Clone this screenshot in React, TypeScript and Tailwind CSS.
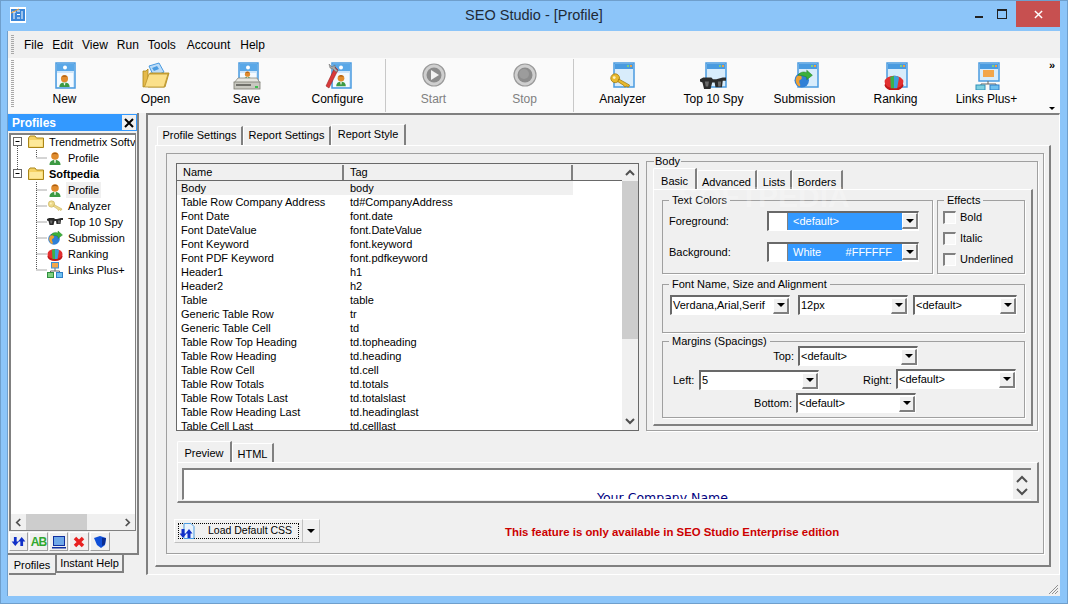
import React from 'react';

const Person: React.FC = () => (
  <svg x="0" y="0" width="16" height="16" viewBox="0 0 16 16">
    <path d="M2.500 15c0-3.500 2-5 5.500-5s5.500 1.500 5.500 5z" fill="#3c9a43" />
    <path d="M7 10h2l-.5 3h-1z" fill="#e6f2e0" />
    <circle cx="8" cy="6" r="3.800" fill="#e08b2c" />
    <path d="M5 4.500C6 2 10 2 11 4.500 9.500 3.800 6.500 3.800 5 4.500z" fill="#a85c12" />
  </svg>
);

const KeyGlyph: React.FC<{ pale?: boolean }> = ({ pale }) => (
  <svg viewBox="0 0 16 16" width="16" height="16">
    <g fill={pale ? '#ecd98a' : '#e8b92e'} stroke={pale ? '#c9b25e' : '#a47d10'} strokeWidth="0.6">
      <circle cx="4.500" cy="6" r="3.200" />
      <path d="M7 6.500l8 4.500-1 1.500-1.500-.8-1 .8-1-1.500-4-2.500z" />
    </g>
    <circle cx="3.800" cy="5.500" r="1" fill="#fff4c0" />
  </svg>
);

const GlassesGlyph: React.FC = () => (
  <svg viewBox="0 0 16 16" width="16" height="16">
    <path d="M0 5l2-1h5l1 1h2l4-1h2v2l-2 0-.5 4h-4L9 7H7.500L6.500 11h-4L1.500 7 0 6.500z" fill="#2c2c2c" />
    <path d="M3 6.500h2.500l-.5 3H3.500zM11 6.500h2l-.3 3h-1.500z" fill="#6b6b6b" />
  </svg>
);

const GlobeGlyph: React.FC = () => (
  <svg viewBox="0 0 16 16" width="16" height="16">
    <circle cx="7" cy="9" r="5.800" fill="#2f7fd6" />
    <path d="M3 6c2-2 4-1 4 1s-2 1-2 3 2 3 0 4C3 13 1 9 3 6z" fill="#f0a030" />
    <path d="M4 5c2-3 5-3 7-2V1l4.500 4L11 8.500V6.500C8.500 5.500 6 5 4 5z" fill="#3bb03b" stroke="#1f7a1f" strokeWidth="0.4" />
  </svg>
);

const PieGlyph: React.FC = () => (
  <svg viewBox="0 0 16 16" width="16" height="16">
    <ellipse cx="8" cy="10.500" rx="7.500" ry="4.500" fill="#c01818" />
    <ellipse cx="8" cy="8" rx="7.500" ry="5" fill="#e23030" />
    <path d="M8 3c2 0 3 .5 4 1.500L10.500 13H8z" fill="#3b9fdc" />
    <path d="M5 4l3-1v10H5.500z" fill="#3cb04a" />
  </svg>
);

const NetworkGlyph: React.FC = () => (
  <svg viewBox="0 0 16 16" width="16" height="16">
    <path d="M8 6v3M3.500 11V9h9v2" stroke="#666" fill="none" />
    <rect x="4.500" y="0.500" width="7" height="5.500" fill="#f3a64a" stroke="#3d8fd8" />
    <rect x="0.500" y="10.500" width="6" height="5" fill="#7fd07f" stroke="#2f8f3f" />
    <rect x="9.500" y="10.500" width="6" height="5" fill="#6fc0f0" stroke="#2f7fc8" />
  </svg>
);

const FolderGlyph: React.FC = () => (
  <svg viewBox="0 0 16 14" width="16" height="14">
    <path d="M.5 3V12.500h15V3h-7L7 1H2z" fill="#f5d264" stroke="#a98518" />
    <path d="M1.500 5h13v6.500h-13z" fill="#fde99a" />
  </svg>
);

// blue window/page used behind most toolbar icons
const AppPage: React.FC<{ x: number; w?: number; h?: number; y?: number }> = ({ x, y = 1, w = 20, h = 24 }) => (
  <g>
    <rect x={x} y={y} width={w} height={h} fill="#d8ecfb" stroke="#4a9be0" strokeWidth="1.500" />
    <rect x={x + 1} y={y + 1} width={w - 2} height="5" fill="#4a9be0" />
    <rect x={x + w - 7} y={y + 2} width="2" height="2" fill="#7fd07f" />
    <rect x={x + w - 4} y={y + 2} width="2" height="2" fill="#f0a040" />
  </g>
);

const ProfilePage: React.FC = () => (
  <g>
    <rect x="5" y="1" width="19" height="25" fill="#cfe6fa" stroke="#4a9be0" strokeWidth="1.500" />
    <rect x="6" y="2" width="17" height="7" fill="#5aa8e8" />
    <circle cx="14" cy="5.500" r="2" fill="#fff" />
    <rect x="6" y="11" width="16" height="14" fill="#f4faff" />
  </g>
);

const Nested: React.FC<{ x: number; y: number; s: number; children: React.ReactNode }> = ({ x, y, s, children }) => (
  <svg x={x} y={y} width={s} height={s} viewBox="0 0 16 16">{children}</svg>
);

const NewIcon: React.FC = () => (
  <svg viewBox="0 0 28 28" width="28" height="28">
    <ProfilePage />
    <Nested x={6} y={11} s={15}><Person /></Nested>
  </svg>
);

const OpenIcon: React.FC = () => (
  <svg viewBox="0 0 28 28" width="28" height="28">
    <path d="M7 4l10-3 5 9-10 5z" fill="#bcdcf8" stroke="#4a9be0" />
    <path d="M10 6l5-2 2 3-5 2z" fill="#4a9be0" />
    <path d="M1 9h3l2-2v18h17l4-14H8L5 24 1 25z" fill="#e5b94a" stroke="#a98518" strokeWidth="0.800" />
    <path d="M7 12h19l-4 13H2.500z" fill="#fbe08a" stroke="#b8922a" strokeWidth="0.800" />
  </svg>
);

const SaveIcon: React.FC = () => (
  <svg viewBox="0 0 28 28" width="28" height="28">
    <g transform="translate(1 0)"><ProfilePage /></g>
    <Nested x={9} y={8} s={11}><Person /></Nested>
    <path d="M5 16h19l3 5H1z" fill="#e6e6e0" stroke="#8a8a80" strokeWidth="0.800" />
    <rect x="1" y="20" width="26" height="7" fill="#c8c8c0" stroke="#7a7a70" strokeWidth="0.800" />
    <rect x="3" y="22" width="15" height="2" fill="#70706a" />
    <rect x="22" y="24" width="3" height="2" fill="#3fbf4f" />
  </svg>
);

const ConfigureIcon: React.FC = () => (
  <svg viewBox="0 0 28 28" width="28" height="28">
    <g transform="translate(3 0)"><ProfilePage /></g>
    <Nested x={10} y={11} s={14}><Person /></Nested>
    <path d="M11 5L2 24l3 2L14 8z" fill="#d93a3a" stroke="#8c1515" strokeWidth="0.500" />
    <path d="M5 2l3 3 3-2v3l3 3-2 1-3-3-3-1z" fill="#a8a8a8" stroke="#666" strokeWidth="0.500" />
  </svg>
);

const MediaIcon: React.FC<{ stop?: boolean }> = ({ stop }) => (
  <svg viewBox="0 0 28 28" width="28" height="28">
    <circle cx="14" cy="13" r="11" fill="#cfcfcf" stroke="#9a9a9a" strokeWidth="1.200" />
    <circle cx="14" cy="13" r="7.500" fill="#8c8c8c" />
    {stop ? <circle cx="13" cy="12" r="5" fill="#9c9c9c" /> : <path d="M11 8l8 5-8 5z" fill="#f2f2f2" />}
  </svg>
);

const AnalyzerIcon: React.FC = () => (
  <svg viewBox="0 0 28 28" width="28" height="28">
    <AppPage x={5} />
    <Nested x={0} y={8} s={22}><KeyGlyph /></Nested>
  </svg>
);

const SpyIcon: React.FC = () => (
  <svg viewBox="0 0 28 28" width="28" height="28">
    <AppPage x={6} />
    <Nested x={0} y={9} s={26}><GlassesGlyph /></Nested>
  </svg>
);

const SubmissionIcon: React.FC = () => (
  <svg viewBox="0 0 28 28" width="28" height="28">
    <AppPage x={7} />
    <Nested x={2} y={7} s={20}><GlobeGlyph /></Nested>
  </svg>
);

const RankingIcon: React.FC = () => (
  <svg viewBox="0 0 28 28" width="28" height="28">
    <AppPage x={5} />
    <Nested x={2} y={10} s={20}><PieGlyph /></Nested>
  </svg>
);

const LinksIcon: React.FC = () => (
  <svg viewBox="0 0 28 28" width="28" height="28">
    <AppPage x={6} h={18} />
    <rect x="10" y="8" width="11" height="7" fill="#f3a64a" />
    <path d="M15 19v3M8 24v-2h15v2" stroke="#666" fill="none" />
    <rect x="3" y="23" width="9" height="5" fill="#7fd0e0" stroke="#2f8fb8" />
    <rect x="17" y="23" width="9" height="5" fill="#6fc0f0" stroke="#2f7fc8" />
  </svg>
);

const Arrow: React.FC = () => (
  <svg viewBox="0 0 8 4" width="8" height="4"><path d="M0 0h8L4 4z" fill="#000" /></svg>
);

const ArrowButton: React.FC = () => (
  <div className="flex h-[16px] w-[16px] shrink-0 items-center justify-center border-t border-l border-r-2 border-b-2 border-t-white border-l-white border-r-[#808080] border-b-[#808080] bg-[#f0f0f0]">
    <Arrow />
  </div>
);

const Combo: React.FC<{ text: string; w: string; className?: string }> = ({ text, w, className }) => (
  <div className={`flex h-[20px] items-center border-t-2 border-l-2 border-r border-b border-t-[#696969] border-l-[#696969] border-r-white border-b-white bg-white ${w} ${className ?? ''}`}>
    <span className="flex-1 truncate pl-[1px]">{text}</span>
    <ArrowButton />
  </div>
);

const ColorCombo: React.FC<{ children: React.ReactNode }> = ({ children }) => (
  <div className="flex h-[20px] w-[152px] border-t-2 border-l-2 border-r border-b border-t-[#696969] border-l-[#696969] border-r-white border-b-white bg-white">
    <div className="w-[19px] shrink-0 border-r border-[#808080] bg-white" />
    <div className="flex flex-1 items-center justify-between bg-[#3399ff] pl-[5px] pr-[10px] text-white">{children}</div>
    <ArrowButton />
  </div>
);

const Tab: React.FC<{ label: string; w: string; active?: boolean; pad?: string }> = ({ label, w, active, pad = 'pb-[2px]' }) => (
  <div
    className={`flex items-center justify-center rounded-tl-[2px] border-t border-l border-r-2 border-t-white border-l-white border-r-[#808080] bg-[#f0f0f0] ${w} ${pad} ${
      active ? 'h-[21px]' : 'h-[19px]'
    }`}
  >
    {label}
  </div>
);

const Group: React.FC<{ title: string; className: string; inner?: string; children: React.ReactNode }> = ({ title, className, inner, children }) => (
  <fieldset className={`border border-[#a0a0a0] shadow-[1px_1px_0_#fff] ${className}`}>
    <legend className="ml-[6px] px-[3px] leading-[14px]">{title}</legend>
    <div className={inner}>{children}</div>
  </fieldset>
);

const Check: React.FC<{ label: string; className?: string }> = ({ label, className }) => (
  <div className={`flex h-[13px] items-center ${className ?? ''}`}>
    <div className="h-[13px] w-[13px] border-t-2 border-l-2 border-r border-b border-t-[#808080] border-l-[#808080] border-r-white border-b-white bg-[#f8f8f8]" />
    <span className="ml-[4px]">{label}</span>
  </div>
);

const ToolButton: React.FC<{ label: string; icon: React.ReactNode; disabled?: boolean }> = ({ label, icon, disabled }) => (
  <div className={`flex w-[91px] flex-col items-center pt-[4px] ${disabled ? 'text-[#808080]' : 'text-black'}`}>
    <div className="h-[28px]">{icon}</div>
    <div className="mt-[2px] leading-[14px]">{label}</div>
  </div>
);

const ToolSep: React.FC<{ className?: string }> = ({ className }) => <div className={`my-[1px] w-[1px] bg-[#c8c8c8] ${className ?? ''}`} />;

const Gripper: React.FC<{ className?: string }> = ({ className }) => (
  <div className={`w-[3px] bg-[repeating-linear-gradient(to_bottom,#a8a8a8_0,#a8a8a8_1px,transparent_1px,transparent_2px)] ${className ?? ''}`} />
);

const TreeRow: React.FC<{
  gutter: number;
  lines: string;
  box?: boolean;
  icon: React.ReactNode;
  label: string;
  bold?: boolean;
  selected?: boolean;
}> = ({ gutter, lines, box, icon, label, bold, selected }) => (
  <div className="flex h-[16px] items-center whitespace-nowrap">
    <svg width={gutter} height="16" className="shrink-0">
      <path d={lines} stroke="#555" strokeDasharray="1 1" fill="none" />
      {box && (
        <g>
          <rect x="2.500" y="3.500" width="8" height="8" fill="#fff" stroke="#666" />
          <path d="M4.500 7.500h4" stroke="#000" />
        </g>
      )}
    </svg>
    <div className="flex w-[16px] shrink-0 justify-center">{icon}</div>
    <span className={`ml-[3px] px-[2px] leading-[16px] ${selected ? 'bg-[#f0f0f0]' : ''} ${bold ? 'font-bold' : ''}`}>{label}</span>
  </div>
);

const SmallButton: React.FC<{ w: string; children: React.ReactNode }> = ({ w, children }) => (
  <div className={`flex h-[19px] items-center justify-center border-t border-l border-r border-b border-t-white border-l-white border-r-[#a0a0a0] border-b-[#a0a0a0] ${w}`}>
    {children}
  </div>
);

const rows: [string, string][] = [
  ['Body', 'body'],
  ['Table Row Company Address', 'td#CompanyAddress'],
  ['Font Date', 'font.date'],
  ['Font DateValue', 'font.DateValue'],
  ['Font Keyword', 'font.keyword'],
  ['Font PDF Keyword', 'font.pdfkeyword'],
  ['Header1', 'h1'],
  ['Header2', 'h2'],
  ['Table', 'table'],
  ['Generic Table Row', 'tr'],
  ['Generic Table Cell', 'td'],
  ['Table Row Top Heading', 'td.topheading'],
  ['Table Row Heading', 'td.heading'],
  ['Table Row Cell', 'td.cell'],
  ['Table Row Totals', 'td.totals'],
  ['Table Row Totals Last', 'td.totalslast'],
  ['Table Row Heading Last', 'td.headinglast'],
  ['Table Cell Last', 'td.celllast'],
];

const TitleBar: React.FC = () => (
  <div className="relative flex h-[30px] shrink-0 items-center justify-center text-[14.500px] text-[#1f2a36]">
    <svg viewBox="0 0 16 16" width="16" height="16" className="absolute left-[9px] top-[6px]">
      <rect width="16" height="16" fill="#fff" />
      <rect x="1" y="2" width="14" height="12" fill="#3a86d8" />
      <path d="M2 5h4M4 5v7M7 4h3M7 7.500h3M7 11h3M12 4v8" stroke="#fff" />
      <path d="M1 6L9 2" stroke="#f0a030" />
    </svg>
    <span className="-mt-[1px]">SEO Studio - [Profile]</span>
    <div className="absolute right-[7px] top-0 flex items-start">
      <div className="mt-[15px] mr-[14px] h-[2px] w-[8px] bg-[#222]" />
      <div className="mt-[8px] mr-[9px] h-[10px] w-[10px] border border-t-2 border-[#222]" />
      <div className="flex h-[26px] w-[44px] items-center justify-center bg-[#c75050]">
        <svg viewBox="0 0 10 10" width="9" height="9"><path d="M1 1l8 8M9 1l-8 8" stroke="#fff" strokeWidth="1.600" /></svg>
      </div>
    </div>
  </div>
);

const MenuBar: React.FC = () => (
  <div className="flex h-[27px] shrink-0 items-center text-[12px]">
    <Gripper className="ml-[3px] h-[20px]" />
    <div className="ml-[10px] flex gap-[9px]">
      <span>File</span>
      <span>Edit</span>
      <span>View</span>
      <span>Run</span>
      <span>Tools</span>
      <span className="ml-[2px]">Account</span>
      <span className="ml-[1px]">Help</span>
    </div>
  </div>
);

const ToolBar: React.FC = () => (
  <div className="flex h-[55px] shrink-0 bg-[#fafafa] text-[12px]">
    <Gripper className="ml-[3px] mr-[5px] mt-[2px] h-[48px]" />
    <ToolButton label="New" icon={<NewIcon />} />
    <ToolButton label="Open" icon={<OpenIcon />} />
    <ToolButton label="Save" icon={<SaveIcon />} />
    <ToolButton label="Configure" icon={<ConfigureIcon />} />
    <ToolSep className="mx-[2px]" />
    <ToolButton label="Start" icon={<MediaIcon />} disabled />
    <ToolButton label="Stop" icon={<MediaIcon stop />} disabled />
    <ToolSep className="ml-[3px] mr-[3px]" />
    <ToolButton label="Analyzer" icon={<AnalyzerIcon />} />
    <ToolButton label="Top 10 Spy" icon={<SpyIcon />} />
    <ToolButton label="Submission" icon={<SubmissionIcon />} />
    <ToolButton label="Ranking" icon={<RankingIcon />} />
    <ToolButton label="Links Plus+" icon={<LinksIcon />} />
    <div className="ml-auto flex w-[16px] flex-col items-center justify-between pb-[3px] text-[11px] font-bold leading-[14px]">
      <span>»</span>
      <svg viewBox="0 0 6 3" width="6" height="3"><path d="M0 0h6L3 3z" fill="#000" /></svg>
    </div>
  </div>
);

const ProfilesPanel: React.FC = () => (
  <div className="flex w-[131px] shrink-0 flex-col">
    <div className="h-[442px] border-r-2 border-b-2 border-[#808080] pt-[1px]">
      <div className="flex h-[17px] items-center justify-between bg-[#3399ff] pl-[4px] pr-[1px] font-bold text-white">
        <span className="text-[12px]">Profiles</span>
        <div className="flex h-[15px] w-[14px] items-center justify-center bg-[#f0f0f0]">
          <svg viewBox="0 0 10 10" width="10" height="10"><path d="M1 1l8 8M9 1l-8 8" stroke="#000" strokeWidth="2" /></svg>
        </div>
      </div>
      <div className="ml-[1px] mt-[2px] flex h-[398px] w-[127px] flex-col border border-l-2 border-t-2 border-[#808080] bg-white">
        <div className="-mt-[1px] flex-1 overflow-hidden">
          <TreeRow gutter={17} lines="M6.500 12V16" box icon={<FolderGlyph />} label="Trendmetrix Softv" />
          <TreeRow gutter={36} lines="M6.500 0V16M25.500 0V8M25.500 8H36" icon={<svg width="16" height="16"><Person /></svg>} label="Profile" />
          <TreeRow gutter={17} lines="M6.500 0V4" box icon={<FolderGlyph />} label="Softpedia" bold />
          <TreeRow gutter={36} lines="M25.500 0V16M25.500 8H36" icon={<svg width="16" height="16"><Person /></svg>} label="Profile" selected />
          <TreeRow gutter={36} lines="M25.500 0V16M25.500 8H36" icon={<KeyGlyph pale />} label="Analyzer" />
          <TreeRow gutter={36} lines="M25.500 0V16M25.500 8H36" icon={<GlassesGlyph />} label="Top 10 Spy" />
          <TreeRow gutter={36} lines="M25.500 0V16M25.500 8H36" icon={<GlobeGlyph />} label="Submission" />
          <TreeRow gutter={36} lines="M25.500 0V16M25.500 8H36" icon={<PieGlyph />} label="Ranking" />
          <TreeRow gutter={36} lines="M25.500 0V8M25.500 8H36" icon={<NetworkGlyph />} label="Links Plus+" />
        </div>
        <div className="flex h-[16px] shrink-0 items-center bg-[#f0f0f0]">
          <div className="flex w-[15px] justify-center">
            <svg viewBox="0 0 8 10" width="7" height="9"><path d="M6 1L2 5l4 4" stroke="#505050" strokeWidth="2" fill="none" /></svg>
          </div>
          <div className="h-[16px] w-[61px] bg-[#cdcdcd]" />
          <div className="ml-auto flex w-[15px] justify-center">
            <svg viewBox="0 0 8 10" width="7" height="9"><path d="M2 1l4 4-4 4" stroke="#505050" strokeWidth="2" fill="none" /></svg>
          </div>
        </div>
      </div>
      <div className="ml-[1px] mt-[1px] flex gap-[1px]">
        <SmallButton w="w-[19px]">
          <svg viewBox="0 0 16 12" width="15" height="11">
            <path d="M11.500 1l4 5H13v5h-3V6H7.500zM4.500 11L.5 6H3V1h3v5h2.500z" fill="#1030c8" />
          </svg>
        </SmallButton>
        <SmallButton w="w-[19px]">
          <span className="text-[12px] font-bold leading-none tracking-[-1px] text-[#30a830]">AB</span>
        </SmallButton>
        <SmallButton w="w-[19px]">
          <svg viewBox="0 0 14 14" width="14" height="14">
            <rect x="1.500" y="1.500" width="11" height="9" fill="#6fa8e8" stroke="#1030a0" />
            <rect y="12" width="14" height="1.500" fill="#1030a0" />
          </svg>
        </SmallButton>
        <SmallButton w="w-[20px]">
          <svg viewBox="0 0 12 12" width="12" height="12"><path d="M2 2l8 8M10 2l-8 8" stroke="#e82020" strokeWidth="3.500" /></svg>
        </SmallButton>
        <SmallButton w="w-[20px]">
          <svg viewBox="0 0 14 14" width="14" height="14">
            <path d="M1 3l6-2 6 2-1 7-4 3-4-3z" fill="#1050d8" />
            <path d="M9 3l4 0-1 6-3 2z" fill="#0a2c90" />
          </svg>
        </SmallButton>
      </div>
    </div>
    <div className="ml-[1px] flex items-start">
      <div className="flex h-[20px] w-[47px] items-center justify-center border-r border-b-2 border-[#808080] bg-[#f0f0f0] pt-[3px]">Profiles</div>
      <div className="flex h-[18px] w-[68px] items-center justify-center border-l border-r-2 border-b-2 border-[#808080] bg-[#f0f0f0] pt-[1px]">Instant Help</div>
    </div>
  </div>
);

const StyleList: React.FC = () => (
  <div className="mt-[9px] flex h-[268px] w-[463px] shrink-0 border border-[#696969] bg-white">
    <div className="w-[445px] overflow-hidden">
      <div className="flex h-[17px] border-b border-[#696969] bg-[#f0f0f0] pt-[1px]">
        <div className="flex w-[167px] items-center border-r-2 border-[#808080] pl-[6px]">Name</div>
        <div className="flex w-[229px] items-center border-r-2 border-[#808080] pl-[6px]">Tag</div>
      </div>
      {rows.map(([name, tag], index) => (
        <div key={name} className={`flex h-[14px] w-[396px] items-center leading-[14px] ${index === 0 ? 'bg-[#f0f0f0]' : ''}`}>
          <span className="w-[173px] pl-[4px]">{name}</span>
          <span>{tag}</span>
        </div>
      ))}
    </div>
    <div className="flex w-[16px] flex-col items-center bg-[#f0f0f0]">
      <div className="flex h-[17px] items-center">
        <svg viewBox="0 0 10 7" width="10" height="7"><path d="M1 6l4-4 4 4" stroke="#505050" strokeWidth="2" fill="none" /></svg>
      </div>
      <div className="h-[158px] w-full bg-[#cdcdcd]" />
      <div className="mt-auto flex h-[17px] items-center">
        <svg viewBox="0 0 10 7" width="10" height="7"><path d="M1 1l4 4 4-4" stroke="#505050" strokeWidth="2" fill="none" /></svg>
      </div>
    </div>
  </div>
);

const BodyGroup: React.FC = () => (
  <fieldset className="relative ml-[7px] h-[277px] w-[392px] border border-[#a0a0a0] pl-[6px] shadow-[1px_1px_0_#fff]">
    <legend className="ml-[1px] px-[1px] leading-[14px]">Body</legend>
    <div className="flex items-end">
      <Tab label="Basic" w="w-[44px]" active pad="pt-[4px]" />
      <Tab label="Advanced" w="w-[60px]" pad="pt-[4px]" />
      <Tab label="Lists" w="w-[35px]" pad="pt-[4px]" />
      <Tab label="Borders" w="w-[51px]" pad="pt-[4px]" />
    </div>
    <div className="h-[237px] w-[380px] border-t border-l border-r-2 border-b-2 border-t-white border-l-white border-r-[#808080] border-b-[#808080] pl-[8px] pt-[3px]">
      <div className="flex">
        <Group title="Text Colors" className="h-[81px] w-[271px]" inner="pl-[6px]">
          <div className="mt-[4px] flex items-center">
            <span className="w-[98px]">Foreground:</span>
            <ColorCombo>&lt;default&gt;</ColorCombo>
          </div>
          <div className="mt-[11px] flex items-center">
            <span className="w-[98px]">Background:</span>
            <ColorCombo>
              <span>White</span>
              <span>#FFFFFF</span>
            </ColorCombo>
          </div>
        </Group>
        <Group title="Effects" className="ml-[4px] h-[81px] w-[88px]" inner="pl-[5px]">
          <Check label="Bold" className="mt-[4px]" />
          <Check label="Italic" className="mt-[8px]" />
          <Check label="Underlined" className="mt-[8px]" />
        </Group>
      </div>
      <Group title="Font Name, Size and Alignment" className="mt-[3px] h-[56px] w-[363px]" inner="pl-[7px]">
        <div className="mt-[4px] flex">
          <Combo text="Verdana,Arial,Serif" w="w-[120px]" />
          <Combo text="12px" w="w-[110px]" className="ml-[8px]" />
          <Combo text="<default>" w="w-[104px]" className="ml-[5px]" />
        </div>
      </Group>
      <Group title="Margins (Spacings)" className="mt-[1px] h-[84px] w-[363px]">
        <div className="-mt-[2px] flex items-center">
          <span className="w-[131px] text-right">Top:</span>
          <Combo text="<default>" w="w-[120px]" className="ml-[4px]" />
        </div>
        <div className="mt-[4px] flex items-center">
          <span className="ml-[10px] w-[26px]">Left:</span>
          <Combo text="5" w="w-[120px]" />
          <span className="ml-[44px] w-[33px]">Right:</span>
          <Combo text="<default>" w="w-[120px]" className="-mt-[2px]" />
        </div>
        <div className="mt-[3px] flex items-center">
          <span className="w-[129px] text-right">Bottom:</span>
          <Combo text="<default>" w="w-[120px]" className="ml-[4px]" />
        </div>
      </Group>
    </div>
    <div className="pointer-events-none absolute left-[31px] top-[14px] whitespace-nowrap text-[30px] font-bold leading-none text-white/25">SOFTPEDIA</div>
  </fieldset>
);

const PreviewPanel: React.FC = () => (
  <div className="ml-[1px] mt-[10px]">
    <div className="flex items-end">
      <Tab label="Preview" w="w-[55px]" active pad="pt-[2px]" />
      <Tab label="HTML" w="w-[42px]" pad="pt-[2px]" />
    </div>
    <div className="h-[41px] w-[862px] border-t border-l border-r-2 border-b-2 border-t-white border-l-white border-r-[#808080] border-b-[#808080] pl-[4px] pt-[5px]">
      <div className="flex h-[32px] w-[849px] overflow-hidden border-t-2 border-l-2 border-b border-t-[#808080] border-l-[#808080] border-b-white bg-white">
        <div className="flex-1 pl-[128px] pt-[20px] text-center font-['DejaVu_Sans',sans-serif] text-[12.500px] leading-[16px] text-[#000080]">Your Company Name</div>
        <div className="flex w-[18px] flex-col items-center gap-[5px] bg-[#f0f0f0] pt-[5px]">
          <svg viewBox="0 0 12 8" width="12" height="8"><path d="M1 7l5-5 5 5" stroke="#505050" strokeWidth="2" fill="none" /></svg>
          <svg viewBox="0 0 12 8" width="12" height="8"><path d="M1 1l5 5 5-5" stroke="#505050" strokeWidth="2" fill="none" /></svg>
        </div>
      </div>
    </div>
  </div>
);

const ActionRow: React.FC = () => (
  <div className="ml-[-2px] mt-[16px] flex items-center">
    <div className="flex h-[24px] w-[129px] items-center border border-[#c0c0c0] border-t-white border-l-white bg-[#f0f0f0] p-[3px]">
      <div className="flex h-[16px] w-full items-center whitespace-nowrap border border-dotted border-black">
        <svg viewBox="0 0 16 16" width="16" height="16" className="shrink-0">
          <path d="M5 .5h7l3 3v12H5z" fill="#e8f2fc" stroke="#4a9be0" />
          <path d="M10 6l3.500 4.500h-2V15h-3v-4.500h-2zM4 15L.5 10.500h2V6h3v4.500h2z" fill="#1030c8" />
        </svg>
        <span className="ml-[13px] text-[10.500px]">Load Default CSS</span>
      </div>
    </div>
    <div className="flex h-[24px] w-[17px] items-center justify-center border border-l-0 border-[#c0c0c0] border-t-white">
      <Arrow />
    </div>
    <span className="ml-[185px] whitespace-nowrap pt-[4px] text-[11.400px] font-bold text-[#cc0000]">This feature is only available in SEO Studio Enterprise edition</span>
  </div>
);

const SettingsPanel: React.FC = () => (
  <div className="ml-[7px] h-[462px] w-[914px] border-t-2 border-l-2 border-r border-b border-t-[#808080] border-l-[#808080] border-r-white border-b-white">
    <div className="ml-[7px] mt-[9px]">
      <div className="flex items-end pl-[2px]">
        <Tab label="Profile Settings" w="w-[86px]" />
        <Tab label="Report Settings" w="w-[88px]" />
        <Tab label="Report Style" w="w-[75px]" active />
      </div>
      <div className="h-[422px] w-[896px] border-t border-l border-r-2 border-b-2 border-t-white border-l-white border-r-[#808080] border-b-[#808080] pl-[10px] pt-[7px]">
        <div className="h-[401px] w-[878px] border border-[#a0a0a0] pl-[9px] shadow-[1px_1px_0_#fff]">
          <div className="flex">
            <StyleList />
            <BodyGroup />
          </div>
          <PreviewPanel />
          <ActionRow />
        </div>
      </div>
    </div>
  </div>
);

const App: React.FC = () => (
  <div className="flex h-[604px] w-[1068px] flex-col overflow-hidden border border-[#6f9fcc] bg-[#8cc5f9] font-['Liberation_Sans',Arial,sans-serif] text-[11px] text-black">
    <TitleBar />
    <div className="relative mb-[7px] ml-[6px] mr-[7px] flex flex-1 flex-col border-l border-[#6f9fcc] bg-[#f0f0f0]">
      <MenuBar />
      <ToolBar />
      <div className="flex">
        <ProfilesPanel />
        <SettingsPanel />
      </div>
      <svg viewBox="0 0 12 12" width="12" height="12" className="absolute bottom-[1px] right-[1px]">
        <path d="M11 2L2 11M11 5L5 11M11 8L8 11" stroke="#909090" />
      </svg>
    </div>
  </div>
);

export default App;
